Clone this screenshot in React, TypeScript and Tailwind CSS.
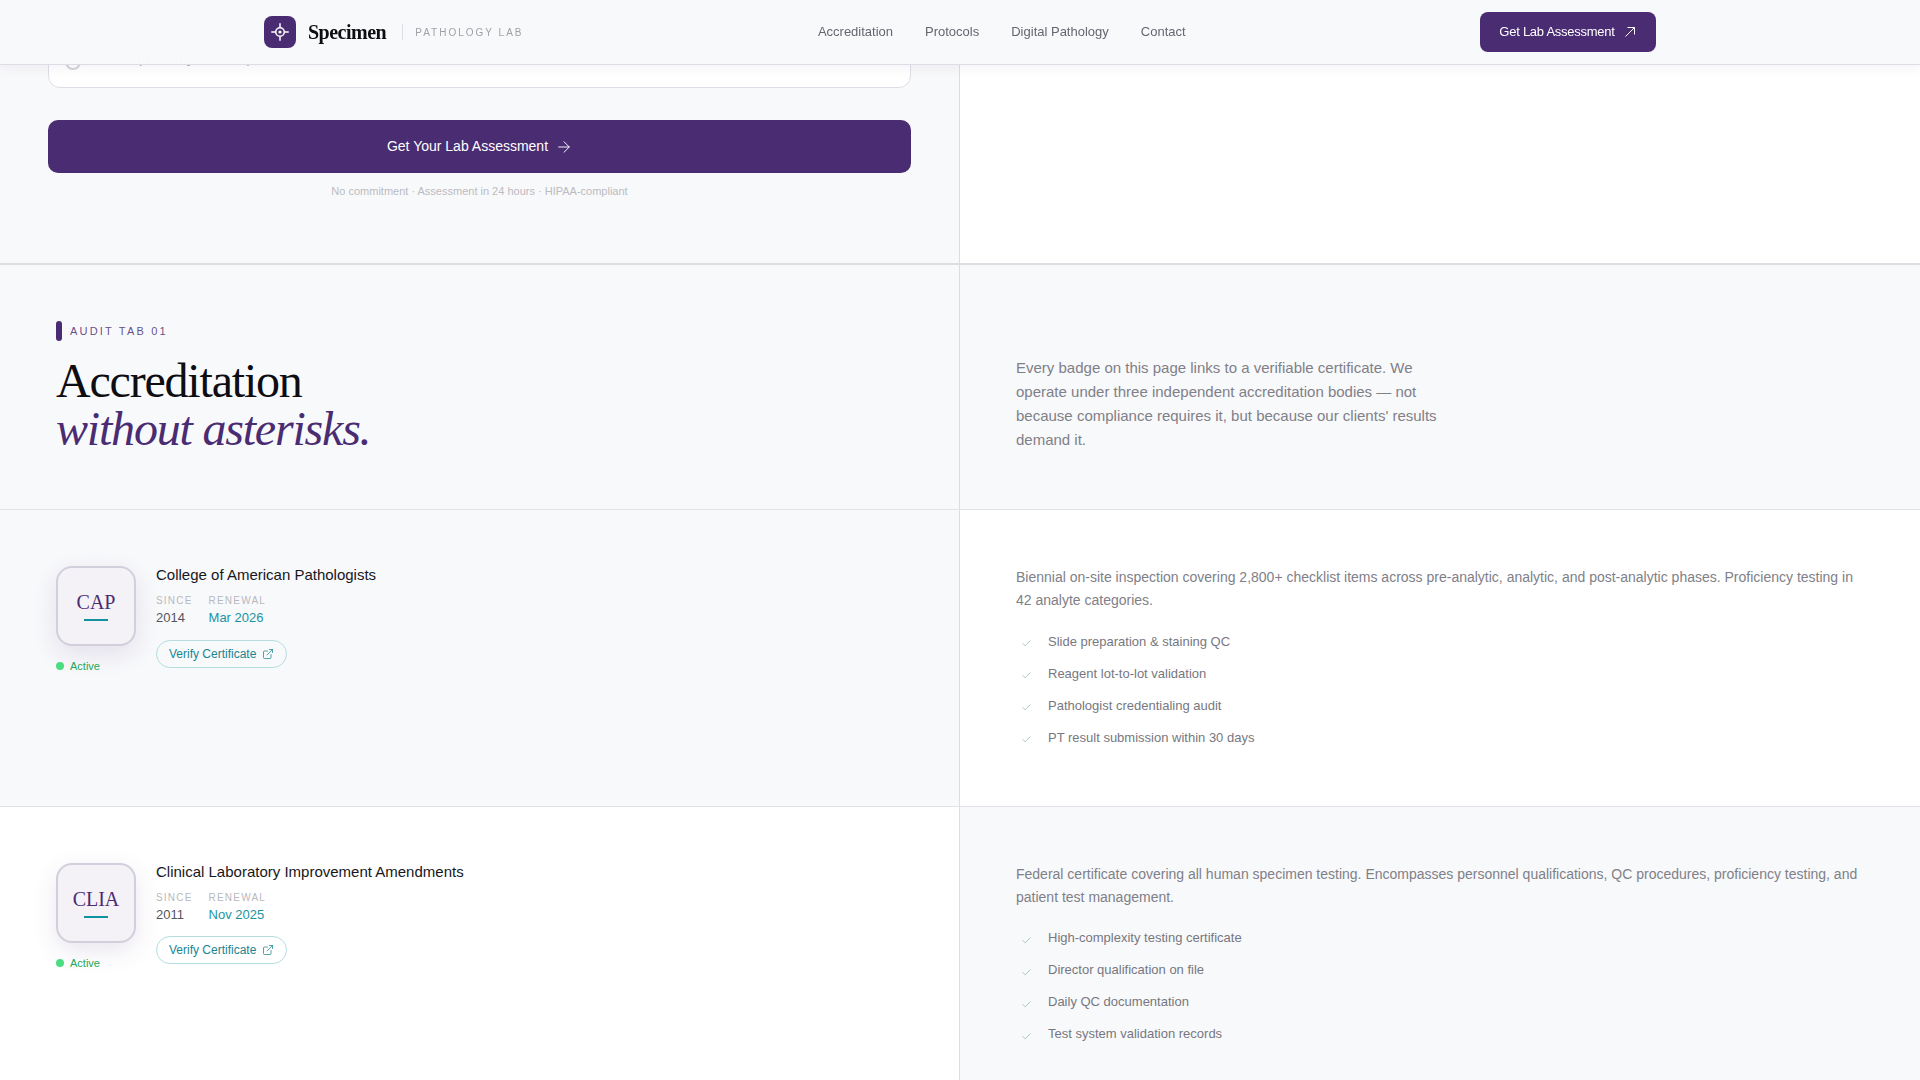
import { ArrowRight, Check, ExternalLink } from 'lucide-react'

interface Accreditation {
  code: string
  name: string
  since: string
  renewal: string
  description: string
  checks: string[]
}

const accreditations: Accreditation[] = [
  {
    code: 'CAP',
    name: 'College of American Pathologists',
    since: '2014',
    renewal: 'Mar 2026',
    description:
      'Biennial on-site inspection covering 2,800+ checklist items across pre-analytic, analytic, and post-analytic phases. Proficiency testing in 42 analyte categories.',
    checks: [
      'Slide preparation & staining QC',
      'Reagent lot-to-lot validation',
      'Pathologist credentialing audit',
      'PT result submission within 30 days',
    ],
  },
  {
    code: 'CLIA',
    name: 'Clinical Laboratory Improvement Amendments',
    since: '2011',
    renewal: 'Nov 2025',
    description:
      'Federal certificate covering all human specimen testing. Encompasses personnel qualifications, QC procedures, proficiency testing, and patient test management.',
    checks: [
      'High-complexity testing certificate',
      'Director qualification on file',
      'Daily QC documentation',
      'Test system validation records',
    ],
  },
]

const navLinks = ['Accreditation', 'Protocols', 'Digital Pathology', 'Contact']

function LogoMark() {
  return (
    <div className="flex h-8 w-8 items-center justify-center rounded-lg bg-[#4a2c72]">
      <svg width="18" height="18" viewBox="0 0 18 18" fill="none" stroke="white" strokeWidth="1.5" strokeLinecap="round">
        <circle cx="9" cy="9" r="4.25" />
        <circle cx="9" cy="9" r="1.6" fill="white" stroke="none" />
        <path d="M9 .75V4M9 14v3.25M.75 9H4M14 9h3.25" />
      </svg>
    </div>
  )
}

function Header() {
  return (
    <header className="fixed inset-x-0 top-0 z-10 h-[65px] border-b border-[#dddee5] bg-[#f8f9fb]/95 shadow-[0_2px_12px_rgba(74,44,114,0.07)] backdrop-blur-md">
      <div className="mx-auto flex h-16 max-w-[1440px] items-center justify-between px-6">
        <div className="flex items-center">
          <LogoMark />
          <span className="ml-3 font-['Liberation_Serif',serif] text-[20px] font-bold tracking-[-0.025em] text-[#0d0d12]">
            Specimen
          </span>
          <span className="ml-4 h-4 w-px bg-[#dddee5]" />
          <span className="ml-3 text-[10px] tracking-[0.2em] text-[#a0a0a8]">PATHOLOGY LAB</span>
        </div>
        <nav className="flex items-center gap-8 text-[13px] text-[#666670]">
          {navLinks.map((link) => (
            <a key={link}>{link}</a>
          ))}
        </nav>
        <button className="flex h-10 w-[176px] items-center justify-center gap-2 rounded-lg bg-[#4a2c72] text-[13px] tracking-[-0.02em] text-white">
          Get Lab Assessment
          <svg width="14" height="14" viewBox="0 0 14 14" fill="none" stroke="white" strokeWidth="1">
            <path d="M2.5 11.5L11.5 2.5M4.5 2.5H11.5V9.5" />
          </svg>
        </button>
      </div>
    </header>
  )
}

function FormEnd() {
  return (
    <section className="grid grid-cols-2 border-b-2 border-[#dcdee3]">
      <div className="h-[263px] border-r border-[#dcdee3] bg-[#f8f9fb] px-12 pt-[35px]">
        <div className="flex h-[53px] items-center rounded-xl border border-[#dddee5] bg-white pl-4 text-[15px] text-[#a8a8b0]">
          <span className="h-4 w-4 rounded-full border-2 border-[#d4d4d8]" />
          <span className="ml-[9px] pb-[6px]">Cases (monthly volume)</span>
        </div>
        <button className="mt-8 flex h-[53px] w-full items-center justify-center gap-[7px] rounded-[10px] bg-[#4a2c72] pl-px text-[14px] text-white">
          Get Your Lab Assessment
          <ArrowRight size={18} strokeWidth={1.25} />
        </button>
        <p className="mt-[10px] text-center text-[11px] text-[#bbbbc0]">
          No commitment · Assessment in 24 hours · HIPAA-compliant
        </p>
      </div>
      <div className="bg-white" />
    </section>
  )
}

function SectionIntro() {
  return (
    <section className="grid h-[245px] grid-cols-2 border-b border-[#e2e3e8] bg-[#f8f9fb]">
      <div className="border-r border-[#dcdee3] px-14 pt-14">
        <div className="flex items-center gap-2">
          <span className="h-5 w-1.5 rounded-full bg-[#4a2c72]" />
          <span className="text-[11px] tracking-[0.2em] text-[#4a2c72]/85">AUDIT TAB 01</span>
        </div>
        <h2 className="mt-4 font-['Liberation_Serif',serif] text-[48px] leading-[48px] font-normal tracking-[-0.025em] text-[#0d0d12]">
          Accreditation
          <br />
          <em className="text-[#4a2c72]">without asterisks.</em>
        </h2>
      </div>
      <div className="flex items-end px-14 pb-[57px]">
        <p className="w-[440px] text-[15px] leading-6 text-[#808088]">
          Every badge on this page links to a verifiable certificate. We operate under three independent
          accreditation bodies — not because compliance requires it, but because our clients' results demand it.
        </p>
      </div>
    </section>
  )
}

function AccreditationRow({ item, index }: { item: Accreditation; index: number }) {
  const isEven = index % 2 === 0
  return (
    <section className="grid h-[296.5px] grid-cols-2 border-b border-[#e2e3e8]">
      <div className={`flex gap-5 border-r border-[#dcdee3] px-14 pt-14 ${isEven ? 'bg-[#f8f9fb]' : 'bg-white'}`}>
        <div className="w-20 shrink-0">
          <div className="flex h-20 w-20 flex-col items-center justify-center rounded-2xl border-2 border-[#d2cfdc] bg-[#f4f2f7] pb-[3px] shadow-[0_8px_24px_rgba(74,44,114,0.12)]">
            <span className="font-['Liberation_Serif',serif] text-[20px] leading-7 text-[#4a2c72]">{item.code}</span>
            <span className="mt-[3px] h-0.5 w-6 bg-[#0f939e]" />
          </div>
          <div className="mt-3 flex items-center gap-1.5">
            <span className="h-2 w-2 rounded-full bg-[#4ade80]" />
            <span className="text-[11px] text-[#22a85a]">Active</span>
          </div>
        </div>
        <div>
          <h3 className="text-[15px] leading-[18px] text-[#17171c]">{item.name}</h3>
          <div className="mt-[10px] flex gap-4">
            <div>
              <p className="text-[10px] leading-[14px] tracking-[0.12em] text-[#b8b8be]">SINCE</p>
              <p className="mt-px text-[13px] leading-[18px] text-[#555560]">{item.since}</p>
            </div>
            <div>
              <p className="text-[10px] leading-[14px] tracking-[0.12em] text-[#b8b8be]">RENEWAL</p>
              <p className="mt-px text-[13px] leading-[18px] text-[#1a94a2]">{item.renewal}</p>
            </div>
          </div>
          <a className="mt-[12.6px] inline-flex h-7 items-center gap-1.5 rounded-full border border-[#b5dde0] px-3 text-[12px] text-[#1a8490]">
            Verify Certificate
            <ExternalLink size={12} strokeWidth={1.5} />
          </a>
        </div>
      </div>
      <div className={`px-14 pt-14 ${isEven ? 'bg-white' : 'bg-[#f8f9fb]'}`}>
        <p className="text-[14px] leading-[23.1px] text-[#808088]">{item.description}</p>
        <ul className="mt-[19.6px] flex flex-col gap-3">
          {item.checks.map((check) => (
            <li key={check} className="flex items-center gap-4 text-[13px] leading-5 text-[#777780]">
              <Check size={11} strokeWidth={1.5} className="mt-1 ml-[5px] text-[#8aabad]" />
              {check}
            </li>
          ))}
        </ul>
      </div>
    </section>
  )
}

export default function App() {
  return (
    <div className="h-[1080px] overflow-hidden bg-white font-['Liberation_Sans',Arial,sans-serif]">
      <Header />
      <main>
        <FormEnd />
        <SectionIntro />
        {accreditations.map((item, index) => (
          <AccreditationRow key={item.code} item={item} index={index} />
        ))}
      </main>
    </div>
  )
}
